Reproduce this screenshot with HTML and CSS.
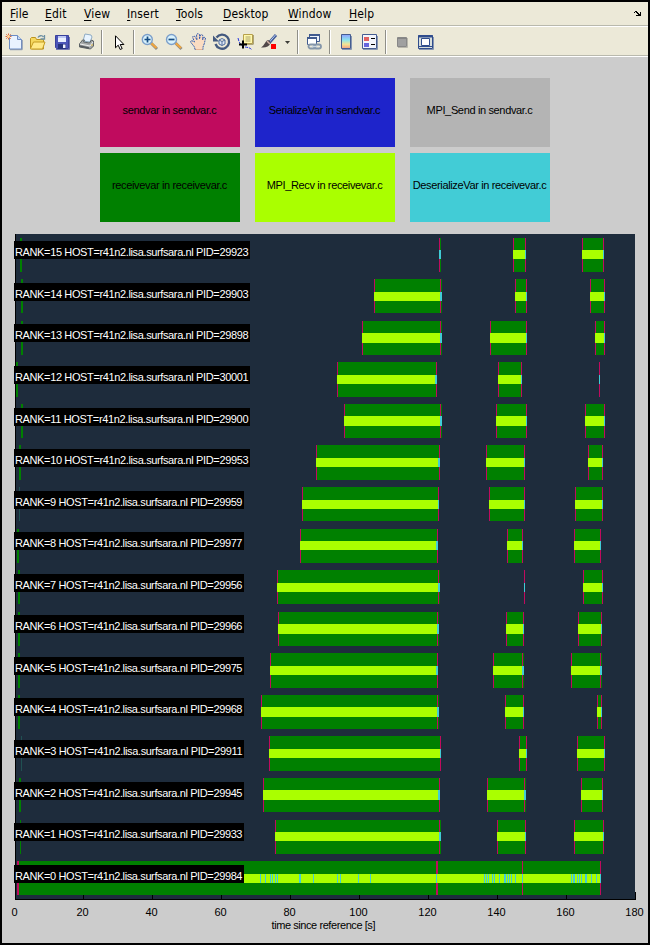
FILE: index.html
```html
<!DOCTYPE html>
<html lang="en">
<head>
<meta charset="utf-8">
<title>Figure</title>
<link rel="stylesheet" href="styles.css">
</head>
<body>
<div class="window">
  <nav class="menubar">
    <span><u>F</u>ile</span><span><u>E</u>dit</span><span><u>V</u>iew</span><span><u>I</u>nsert</span><span><u>T</u>ools</span><span><u>D</u>esktop</span><span><u>W</u>indow</span><span><u>H</u>elp</span>
    <svg class="dock" width="8" height="6" viewBox="0 0 8 6" shape-rendering="crispEdges"><path d="M1 0h2v1h1v1h1v1h1V1h1v4H2V4h2V3H3V2H2V1H1v1H0V1h1z"/></svg>
  </nav>
  <div class="toolbar">
    <svg class="icon" viewBox="0 0 20 20"><path d="M5.500 3.500h8l4 4v9.500h-12z" fill="#eaf3ff" stroke="#6d8cc4"/><path d="M13.500 3.500v4h4" fill="#c6d9f5" stroke="#6d8cc4"/><path d="M6 17.700h12.200V8" fill="none" stroke="#8292ad"/><path d="M4.500 1.500v6M1.500 4.500h6M2.300 2.300l4.400 4.400M6.700 2.300L2.300 6.700" stroke="#d9683a"/><circle cx="4.500" cy="4.500" r="1.400" fill="#ffd9a0"/></svg>
    <svg class="icon" viewBox="0 0 20 20"><path d="M3.500 16V6.500l1-1h4l1 2h7v9.500h-12z" fill="#f5d85f" stroke="#bd941f"/><path d="M3.500 16.500l3-6.500h11.500l-2.500 7h-12z" fill="#ffe987" stroke="#c39b22"/><path d="M11 5.500c1-2 4-2.500 5.500-.5M17.500 3v4h-4" fill="none" stroke="#6c8fa3" stroke-width="1.300"/></svg>
    <svg class="icon" viewBox="0 0 20 20"><path d="M3.500 3.500h13v13h-12l-1-1z" fill="#4c55b8" stroke="#39409b"/><path d="M4 17.500h13.500V5" fill="none" stroke="#7479b2"/><path d="M6 4h8v6H6z" fill="#e9efff"/><path d="M6 4h8v2H6z" fill="#bcc7f4"/><path d="M6 12h8v5H6z" fill="#26337d"/><path d="M11 12.500h2.500V16H11z" fill="#f1f3ff"/></svg>
    <svg class="icon" viewBox="0 0 20 20"><path d="M7 9l2-7 6 1 1 2-2 5z" fill="#e8f4ff" stroke="#8eabc3"/><path d="M3.500 12l3-4h2l-1 2 6 1 2-3 2 1v5l-3 3-11-2z" fill="#a5a8a9" stroke="#5c6265"/><path d="M4 12l10 2 3-4" fill="none" stroke="#eee"/><path d="M4 14l9 2" stroke="#54585c" stroke-width="1.500"/><path d="M15 13h2" stroke="#edc84c"/></svg>
    <i class="sep"></i>
    <svg class="icon" viewBox="0 0 20 20"><path d="M6.500 3.800v12l2.700-2.600 2 4.300 2-.9-2-4.100h3.700z" fill="#fff" stroke="#000"/></svg>
    <i class="sep"></i>
    <svg class="icon" viewBox="0 0 20 20"><path d="M12 11l6 6" stroke="#8c8b88" stroke-width="3"/><path d="M12 11l5.500 5" stroke="#efa640" stroke-width="2.300"/><circle cx="8.300" cy="7.500" r="5" fill="#d9f2fc" stroke="#7c9fca" stroke-width="1.400"/><path d="M5.500 7.500h6M8.500 4.500v6" stroke="#164c83" stroke-width="1.700"/></svg>
    <svg class="icon" viewBox="0 0 20 20"><path d="M11.500 11l6 6" stroke="#8c8b88" stroke-width="3"/><path d="M11.500 11l5.500 5" stroke="#efa640" stroke-width="2.300"/><circle cx="7.500" cy="7.500" r="5" fill="#d9f2fc" stroke="#7c9fca" stroke-width="1.400"/><path d="M4.500 7.500h6" stroke="#164c83" stroke-width="1.700"/></svg>
    <svg class="icon" viewBox="0 0 20 20"><path d="M7 17.500L6.500 15 2.500 10l1-1.500 3 1.500-2-5 1-1 1.500.5L9 8 8.500 2.500l1.500-1 1.500 1V7l1-4 1.500-.5 1 1.500-.5 4 1.500-3 1.500 1-1 5-1.500 4v2.500z" fill="#fbdcc2" stroke="#375fb0" stroke-dasharray="2 .7"/><path d="M7.500 17.500h7" stroke="#e5b493"/></svg>
    <svg class="icon" viewBox="0 0 20 20"><path d="M5.500 5.500A7 7 0 1 1 4.500 12" fill="none" stroke="#43597f" stroke-width="2.300"/><path d="M2 3.500v6h6z" fill="#43597f"/><path d="M8 8l3-1.500L14 8v4l-3 1.500L8 12zM8 8l3 1.500L14 8M11 9.500v4" fill="#dce7f7" stroke="#536f9d"/></svg>
    <svg class="icon" viewBox="0 0 20 20"><path d="M3 6c1 5 3 8 7 9 3 .5 5 .5 7 3" fill="none" stroke="#2637e0" stroke-dasharray="3 1"/><path d="M8.500 2.500h9v9h-9z" fill="#fff9ad" stroke="#b7a04b"/><path d="M9 12.300h9.300V3" fill="none" stroke="#9e9360"/><path d="M10.500 5h5M10.500 7h5M10.500 9h5" stroke="#aaa16a"/><path d="M4 12.500h8M8 8.500v8" stroke="#000" stroke-width="2"/></svg>
    <svg class="icon" viewBox="0 0 20 20"><path d="M17 3l-7 8" stroke="#435b97" stroke-width="3"/><path d="M16.500 3l-6.500 7.500" stroke="#b4caf0"/><path d="M11 9l-2-1c-3 1-3 5-7 7.500 5 .5 8-1 9.500-4z" fill="#514849"/><path d="M8 9l3 3" stroke="#d2b2a7" stroke-width="1.500"/><path d="M12 12h5v5h-5z" fill="#f00"/></svg>
    <svg class="icon caret" viewBox="0 0 8 20"><path d="M2 9h5L4.500 12z" fill="#3d3d38"/></svg>
    <i class="sep"></i>
    <svg class="icon" viewBox="0 0 20 20"><path d="M6.500 2.500h10v7h-10z" fill="#edf3fb" stroke="#405a8e"/><path d="M6 3h11" stroke="#405a8e" stroke-width="2"/><path d="M4.500 5.500h9v7h-9z" fill="#fff" stroke="#405a8e"/><path d="M4 6h10" stroke="#405a8e" stroke-width="2"/><rect x="5.500" y="12.500" width="7" height="4" rx="2" fill="none" stroke="#8496aa" stroke-width="1.800"/><rect x="11" y="12.500" width="7" height="4" rx="2" fill="none" stroke="#8496aa" stroke-width="1.800"/><path d="M9 14.500h5" stroke="#cad6e2" stroke-width="1.300"/></svg>
    <i class="sep"></i>
    <svg class="icon" viewBox="0 0 20 20"><defs><linearGradient id="map" x2="0" y2="1"><stop stop-color="#90a0ff"/><stop offset=".4" stop-color="#8be6ed"/><stop offset=".7" stop-color="#f5e492"/><stop offset="1" stop-color="#ee9e85"/></linearGradient></defs><path d="M6 17.500h9.500V4" fill="none" stroke="#8796b1"/><path d="M5.500 2.500h9v14h-9z" fill="url(#map)" stroke="#455d91"/></svg>
    <svg class="icon" viewBox="0 0 20 20"><path d="M3 17.500h14.500V4" fill="none" stroke="#8796b1"/><path d="M2.500 2.500h14v14h-14z" fill="#f2f5fc" stroke="#455d91"/><path d="M4 5h5v4H4z" fill="#e26161"/><path d="M4 11h5v4H4z" fill="#6565de"/><path d="M11 6.500h4M11 12.500h4" stroke="#000"/></svg>
    <i class="sep"></i>
    <svg class="icon" viewBox="0 0 20 20"><path d="M6 15.500h9.500V6" fill="none" stroke="#b9b7ac"/><path d="M5.500 5.500h9v9h-9z" fill="#a0a0a0" stroke="#888"/><path d="M5 6.500h10" stroke="#858585"/></svg>
    <svg class="icon" viewBox="0 0 20 20"><path d="M3 17.500h14.500V5" fill="none" stroke="#8796b1"/><path d="M2.500 3.500h14v13h-14z" fill="#d9dfdc" stroke="#304d8d"/><path d="M2 4.500h15" stroke="#304d8d" stroke-width="2"/><path d="M5.500 6.500h8v7h-8z" fill="#fff" stroke="#304d8d"/><path d="M3 14.500h13" stroke="#304d8d"/></svg>
  </div>
  <main class="figure">
    <section class="legend">
      <div class="key sendvar">sendvar in sendvar.c</div>
      <div class="key serialize">SerializeVar in sendvar.c</div>
      <div class="key mpi-send">MPI_Send in sendvar.c</div>
      <div class="key receivevar">receivevar in receivevar.c</div>
      <div class="key mpi-recv">MPI_Recv in receivevar.c</div>
      <div class="key deserialize">DeserializeVar in receivevar.c</div>
    </section>
    <svg class="chart" id="chart" width="646" height="715" viewBox="2 228 646 715"></svg>
  </main>
</div>
<script src="chart.js"></script>
</body>
</html>
```
FILE: styles.css
```css
* { box-sizing: border-box; }
body { margin: 0; background: #000; }
.window {
  width: 650px;
  height: 945px;
  border: 2px solid #000;
  background: #ccc;
  display: flex;
  flex-direction: column;
}
.menubar {
  flex: none;
  height: 25px;
  padding: 0 6px 0 8px;
  display: grid;
  grid-template-columns: 35px 39px 43px 49px 47px 65px 61px 1fr auto;
  align-items: center;
  background: #ece9d8;
  border-bottom: 1px solid #fff;
  box-shadow: inset 0 -1px #b9b9ad;
  font: 12px/22px "DejaVu Sans Condensed", "DejaVu Sans", sans-serif;
  font-stretch: condensed;
  letter-spacing: 0.15px;
  color: #000;
}
.menubar u { text-underline-offset: 2px; text-decoration-thickness: 1px; }
.dock { display: block; }
.toolbar {
  flex: none;
  height: 30px;
  padding: 1px 0 0 2px;
  display: grid;
  grid-template-columns: 23px 25px 24px 25px 8px 24px 6px 25px 24px 23px 24px 24px 24px 14px 6px 26px 7px 24px 25px 7px 24px 24px;
  align-items: center;
  background: #ece9d8;
  border-bottom: 1px solid #fff;
  box-shadow: inset 0 -1px #b9b9ad;
}
.icon { display: block; width: 20px; height: 20px; }
.caret { width: 8px; }
.sep {
  width: 2px;
  height: 24px;
  background: #8f8f88;
  border-right: 1px solid #fff;
}
.figure { flex: 1; padding-top: 21px; }
.legend {
  display: grid;
  grid-template-columns: repeat(3, 140px);
  grid-auto-rows: 69px;
  gap: 6px 15px;
  margin-left: 98px;
  margin-bottom: 6px;
}
.key {
  display: flex;
  align-items: center;
  justify-content: center;
  padding: 0 1px 5px 0;
  font: 11px/14px "Liberation Sans", Arial, sans-serif;
  letter-spacing: -0.35px;
  white-space: nowrap;
  color: #000;
}
.sendvar { background: #c00b5e; }
.serialize { background: #1e24cb; }
.mpi-send { background: #b4b4b4; }
.receivevar { background: #008000; }
.mpi-recv { background: #aaff00; }
.deserialize { background: #42ccd6; }
.chart {
  display: block;
  shape-rendering: crispEdges;
  font: 11px "Liberation Sans", Arial, sans-serif;
}
.host { fill: #fff; }
.axis { text-anchor: middle; fill: #000; }
```
FILE: chart.js
```js
const C = { send: '#c00b5e', recv: '#008000', mpi: '#aaff00', des: '#42ccd6', plot: '#1e2c3c' };

// [rank, pid, top, bottom, stripe top, stripe bottom, label top, start mark, segments]
// segment: [start, end, closing send mark, deserialize start]
const rows = [
  [15, 29923, 238, 272, 250, 259, 241, [20, 22], [[439, 441, 439, 439], [513, 526, 525, 525], [582, 604, 603, 603]]],
  [14, 29903, 279, 313, 292, 301, 283, [21, 23], [[374, 442, 440, 440], [515, 527, 526, 526], [590, 605, 604, 604]]],
  [13, 29898, 321, 355, 333, 343, 324, [21, 23], [[362, 442, 440, 440], [490, 527, 526, 526], [595, 605, 604, 604]]],
  [12, 30001, 362, 397, 375, 384, 366, [16, 18], [[337, 437, 436, 435], [498, 522, 521, 521], [599, 600, 599, 599]]],
  [11, 29900, 404, 438, 416, 426, 408, [21, 23], [[344, 442, 440, 440], [496, 527, 526, 526], [585, 605, 604, 604]]],
  [10, 29953, 445, 480, 458, 467, 449, [19, 21], [[316, 440, 439, 438], [486, 525, 524, 524], [588, 603, 602, 602]]],
  [9, 29959, 487, 521, 500, 509, 491, [19, 20], [[302, 439, 438, 438], [489, 525, 524, 524], [575, 603, 602, 602]]],
  [8, 29977, 529, 563, 541, 550, 532, [17, 19], [[300, 438, 437, 436], [507, 523, 522, 522], [574, 601, 600, 600]]],
  [7, 29956, 570, 604, 583, 592, 574, [18, 20], [[277, 440, 438, 438], [524, 525, 524, 524], [583, 603, 602, 602]]],
  [6, 29966, 612, 646, 624, 634, 615, [18, 20], [[278, 439, 437, 437], [506, 524, 523, 523], [578, 602, 601, 601]]],
  [5, 29975, 653, 688, 666, 675, 657, [18, 20], [[270, 438, 437, 436], [493, 524, 522, 522], [571, 602, 600, 600]]],
  [4, 29968, 695, 729, 707, 717, 698, [18, 20], [[261, 439, 437, 437], [505, 524, 523, 523], [597, 602, 601, 601]]],
  [3, 29911, 736, 771, 749, 758, 740, [21, 22], [[269, 441, 440, 440], [519, 527, 526, 526], [577, 605, 604, 604]]],
  [2, 29945, 778, 812, 790, 800, 782, [19, 21], [[263, 440, 439, 438], [487, 526, 524, 524], [581, 603, 602, 602]]],
  [1, 29933, 820, 854, 832, 841, 823, [20, 21], [[275, 441, 439, 439], [497, 526, 525, 525], [574, 604, 603, 603]]],
  [0, 29984, 861, 895, 874, 883, 865, null, []]
];
const rootSend = [[17, 2], [436, 2], [522, 1], [600, 1]];
const rootDes = [260, 265, 270, 272, 275, 277, 299, 300, 313, 337, 340, 358, 370, 436,
  484, 486, 488, 492, 494, 499, 504, 505, 507, 509, 511, 515, 522,
  571, 573, 574, 577, 579, 581, 585, 586, 591, 596, 600];

const rect = (x0, y0, x1, y1, fill) =>
  `<rect x="${x0}" y="${y0}" width="${x1 - x0}" height="${y1 - y0}" fill="${fill}"/>`;

let out = rect(15, 234, 635, 900, C.plot) + rect(15, 234, 16, 900, '#000') + rect(15, 899, 636, 900, '#000');
for (let i = 0; i < 9; i++) {
  const x = 15 + Math.floor(i * 68.9);
  out += rect(x, 895, x + 1, 900, '#000') + `<text class="axis" x="${x - 0.5}" y="916">${i * 20}</text>`;
}
out += rect(635, 892, 636, 900, '#000') + '<text class="axis" x="634.5" y="916">180</text>';
out += '<text class="axis" x="323.500" y="929" textLength="104">time since reference [s]</text>';

for (const [rank, pid, top, bottom, s0, s1, label, mark, segs] of rows) {
  if (mark) out += rect(mark[0], top, mark[1], bottom, rank === 3 || rank === 9 ? '#205052' : C.recv);
  for (const [a, b, send, des] of segs) {
    out += rect(a, top, b, bottom, C.recv) + rect(a, top, a + 1, bottom, C.send) +
      rect(send, top, send + 1, bottom, C.send) + rect(a, s0, des, s1, C.mpi) + rect(des, s0, b, s1, C.des);
  }
  if (rank === 0) {
    out += rect(17, top, 601, bottom, C.recv);
    for (const [x, w] of rootSend) out += rect(x, top, x + w, bottom, C.send);
    out += rect(244, s0, 601, s1, C.mpi);
    for (const x of rootDes) out += rect(x, s0, x + 1, s1, C.des);
  }
  const right = rank > 9 ? 250 : 244;
  out += rect(14, label, right, label + 18, '#000') +
    `<text class="host" x="15" y="${label + 15}" textLength="${right - 16.5}">RANK=${rank} HOST=r41n2.lisa.surfsara.nl PID=${pid}</text>`;
}
document.getElementById('chart').innerHTML = out;
```
